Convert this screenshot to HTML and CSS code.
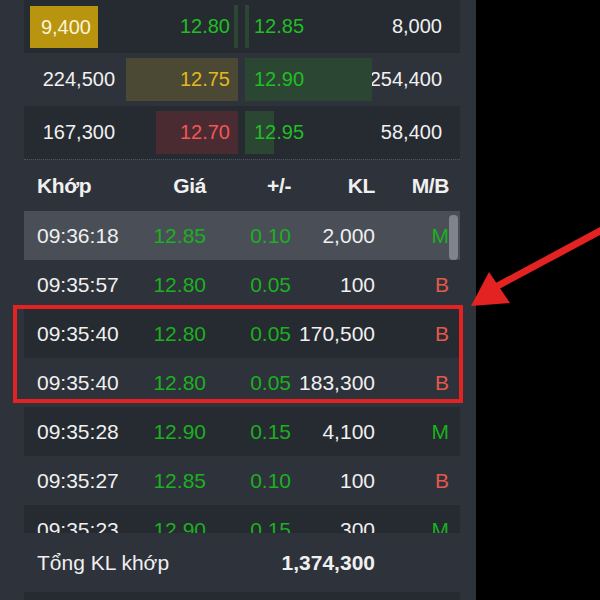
FILE: index.html
```html
<!DOCTYPE html>
<html>
  <head>
    <link rel="stylesheet" href="styles.css">
  </head>
  <body>
    <div class="screen">
      <div class="panel">
        <div class="book">
          <div class="book-row dark">
            <div class="qty"><span class="flash">9,400</span></div>
            <div class="bid"><span class="bar bar-up" style="width:4px"></span><span class="px up">12.80</span></div>
            <div class="ask"><span class="bar bar-up" style="width:4px"></span><span class="px up">12.85</span></div>
            <div class="qty right">8,000</div>
          </div>
          <div class="book-row">
            <div class="qty">224,500</div>
            <div class="bid"><span class="bar bar-ref" style="width:112px"></span><span class="px ref">12.75</span></div>
            <div class="ask"><span class="bar bar-up" style="width:127px"></span><span class="px up">12.90</span></div>
            <div class="qty right">254,400</div>
          </div>
          <div class="book-row dark">
            <div class="qty">167,300</div>
            <div class="bid"><span class="bar bar-down" style="width:82px"></span><span class="px down">12.70</span></div>
            <div class="ask"><span class="bar bar-up" style="width:29px"></span><span class="px up">12.95</span></div>
            <div class="qty right">58,400</div>
          </div>
        </div>
        <div class="sep"></div>
        <div class="trade-row trade-head">
          <span class="time">Khớp</span>
          <span>Giá</span>
          <span>+/-</span>
          <span>KL</span>
          <span>M/B</span>
        </div>
        <div class="trades">
          <div class="trade-row active">
            <span class="time">09:36:18</span><span class="up">12.85</span><span class="up">0.10</span><span>2,000</span><span class="up">M</span>
          </div>
          <div class="trade-row">
            <span class="time">09:35:57</span><span class="up">12.80</span><span class="up">0.05</span><span>100</span><span class="sell">B</span>
          </div>
          <div class="trade-row dark">
            <span class="time">09:35:40</span><span class="up">12.80</span><span class="up">0.05</span><span>170,500</span><span class="sell">B</span>
          </div>
          <div class="trade-row">
            <span class="time">09:35:40</span><span class="up">12.80</span><span class="up">0.05</span><span>183,300</span><span class="sell">B</span>
          </div>
          <div class="trade-row dark">
            <span class="time">09:35:28</span><span class="up">12.90</span><span class="up">0.15</span><span>4,100</span><span class="up">M</span>
          </div>
          <div class="trade-row">
            <span class="time">09:35:27</span><span class="up">12.85</span><span class="up">0.10</span><span>100</span><span class="sell">B</span>
          </div>
          <div class="trade-row dark">
            <span class="time">09:35:23</span><span class="up">12.90</span><span class="up">0.15</span><span>300</span><span class="up">M</span>
          </div>
          <div class="scroll-thumb"></div>
        </div>
        <div class="trade-row total">
          <span class="label">Tổng KL khớp</span>
          <span class="sum">1,374,300</span>
          <span></span>
        </div>
        <div class="foot-row"></div>
      </div>

      <div class="mark"></div>
      <svg class="arrow" width="600" height="600" viewBox="0 0 600 600">
        <line x1="602" y1="230" x2="490" y2="290" stroke="#e32222" stroke-width="7"/>
        <polygon points="471,306 489,272 510,303" fill="#e32222"/>
      </svg>
    </div>
  </body>
</html>
```

FILE: styles.css
```css
body {
  margin: 0;
  background: #000;
  font-family: "Liberation Sans", Arial, sans-serif;
  color: #f0f0f0;
}
.screen {
  position: relative;
  width: 600px;
  height: 600px;
  overflow: hidden;
}
.panel {
  width: 436px;
  height: 600px;
  padding: 0 16px 0 24px;
  background: #2e323a;
  overflow: hidden;
}

/* order book */
.book-row {
  display: grid;
  grid-template-columns: 96px 118px 135px 87px;
  column-gap: 0;
  height: 53px;
  font-size: 20px;
}
.book-row .ask {
  margin-left: 7px;
}
.book-row.dark {
  background: #262a31;
}
.qty {
  display: flex;
  align-items: center;
  justify-content: flex-end;
  padding-right: 5px;
}
.qty.right {
  padding-right: 18px;
  margin-left: -7px;
}
.flash {
  display: flex;
  align-items: center;
  height: 42px;
  padding: 0 7px 0 11px;
  margin-right: 17px;
  margin-top: 1px;
  background: #b8940f;
  color: #fbf3d8;
}
.bid,
.ask {
  position: relative;
  display: flex;
  align-items: center;
}
.bid {
  justify-content: flex-end;
  padding-right: 8px;
}
.ask {
  justify-content: flex-start;
  padding-left: 9px;
}
.bar {
  position: absolute;
  top: 5px;
  bottom: 5px;
}
.bid .bar {
  right: 0;
}
.ask .bar {
  left: 0;
}
.bar-up {
  background: #2c4634;
}
.bar-ref {
  background: #4b4933;
}
.bar-down {
  background: #4a2b31;
}
.px {
  position: relative;
}
.up {
  color: #1fbf22;
}
.ref {
  color: #e2b91c;
}
.down {
  color: #f25656;
}
.sell {
  color: #e4594b;
}

.sep {
  height: 1px;
  border-top: 1px dotted #4e535b;
}

/* matched trades */
.trade-row {
  display: grid;
  grid-template-columns: 103px 66px 85px 84px 74px;
  align-items: center;
  height: 49px;
  padding: 0 11px 0 13px;
  font-size: 21px;
  text-align: right;
}
.trade-row .time {
  text-align: left;
}
.trade-head {
  height: 50px;
  font-weight: bold;
  letter-spacing: -0.4px;
}
.trade-row .up {
  color: #1bb01f;
}
.trade-row.dark {
  background: #262a31;
}
.trade-row.active {
  background: #4a4f57;
}
.trades {
  position: relative;
  height: 322px;
  overflow: hidden;
}
.scroll-thumb {
  position: absolute;
  top: 4px;
  right: 2px;
  width: 9px;
  height: 45px;
  border-radius: 4px;
  background: #7e848c;
}
.total {
  grid-template-columns: 188px 150px 74px;
  height: 59px;
}
.total .label {
  text-align: left;
}
.total .sum {
  font-weight: bold;
}
.foot-row {
  height: 40px;
  background: #262a31;
}

/* annotation overlay */
.mark {
  position: absolute;
  left: 13px;
  top: 305px;
  width: 450px;
  height: 98px;
  box-sizing: border-box;
  border: 4px solid #e32222;
}
.arrow {
  position: absolute;
  left: 0;
  top: 0;
  pointer-events: none;
}
```
